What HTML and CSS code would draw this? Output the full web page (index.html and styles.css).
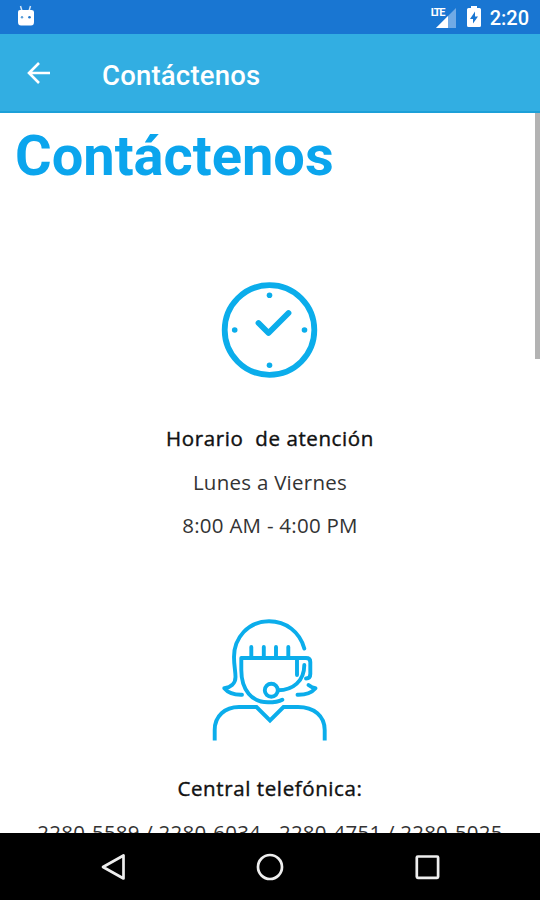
FILE: index.html
```html
<!DOCTYPE html>
<html lang="es">
<head>
  <meta charset="UTF-8">
  <meta name="viewport" content="width=device-width, initial-scale=1.0">
  <title>Contáctenos</title>
  <link rel="stylesheet" href="styles.css">
</head>
<body>
  <div class="estado">
    <svg class="android" width="18" height="22" viewBox="0 0 18 22">
      <path d="M3.500 1L5 6M13.500 1L12 6" stroke="#d5e8fa" stroke-width="1.500"/>
      <path d="M1 7Q1 5 3 5H14.500Q17 5 17 7V17Q17 20.500 14 20.500H4Q1 20.500 1 17Z" fill="#fff"/>
      <circle cx="5" cy="12.300" r="1.200" fill="#5d9fd8"/>
      <circle cx="12.500" cy="12.300" r="1.300" fill="#2378cc"/>
    </svg>
    <div class="indicadores">
      <div class="senal">
        <svg width="20" height="20" viewBox="0 0 20 20">
          <path d="M0 20L20 0V20Z" fill="#71aae5"/>
          <path d="M0 20L12 8V20Z" fill="#fff"/>
        </svg>
        <span class="lte">LTE</span>
      </div>
      <svg class="bateria" width="14" height="22" viewBox="0 0 14 22">
        <path d="M4 0H10V2H12.500Q14 2 14 3.500V19.500Q14 21 12.500 21H1.500Q0 21 0 19.500V3.500Q0 2 1.500 2H4Z" fill="#fff"/>
        <path d="M8 5.500L3 13H6V17.500L11 10.500H8Z" fill="#1976d2"/>
      </svg>
      <span class="hora">2:20</span>
    </div>
  </div>

  <header>
    <svg class="volver" width="24" height="24" viewBox="0 0 24 24">
      <path d="M12 2L2 12L12 22M2 12H23" fill="none" stroke="#fff" stroke-width="2.600"/>
    </svg>
    <span class="titulo">Contáctenos</span>
  </header>

  <main class="contenido">
    <h1>Contáctenos</h1>

    <section class="bloque horario">
      <svg width="120" height="120" viewBox="0 0 120 120">
        <g fill="none" stroke="#0badeb" stroke-width="5.800" stroke-linecap="round" stroke-linejoin="round">
          <circle cx="59.500" cy="60" r="44.800"/>
          <path d="M48.500 53L58.500 63L78.500 43"/>
        </g>
        <g fill="#0badeb">
          <circle cx="59.500" cy="25.200" r="2.800"/>
          <circle cx="59.500" cy="95.200" r="2.800"/>
          <circle cx="24.700" cy="60" r="2.800"/>
          <circle cx="94.500" cy="60" r="2.800"/>
        </g>
      </svg>
      <p class="negrita horas-titulo">Horario&nbsp; de atención</p>
      <p class="dias">Lunes a Viernes</p>
      <p class="horas">8:00 AM - 4:00 PM</p>
    </section>

    <section class="bloque central">
      <svg width="140" height="140" viewBox="0 0 140 140">
        <g fill="none" stroke="#0badeb" stroke-width="3.900" stroke-linecap="round" stroke-linejoin="round">
          <path d="M104.300 38.500C100 22 86 11.300 69 11.300C48 11.300 34 28 34 47C34 56 35.500 61 35.500 67C35.500 74 30 77.500 24.300 78.300C29 84 35 85 42 84.800"/>
          <path d="M51.300 37V47M63.800 37V47M76 37V47M88.300 37V47"/>
          <path d="M97 65V48H41.300V60C41.300 80 52 92.300 68 92.300C74 92.300 79 91.500 82.300 89.700"/>
          <path d="M97 48H106Q110.300 48 110.300 52V64Q110.300 68.500 106 68.500"/>
          <path d="M104.300 55C104.300 71 93 80.300 78 80.300"/>
          <circle cx="71.300" cy="80.300" r="6.500"/>
          <path d="M108.500 75C111 77 113 78 115.500 78.300C111 83.500 105 85 97.500 84.800"/>
        </g>
        <path d="M14.700 130.500V120C14.700 106 25 97 39 97H56.500L70 110.500L83.500 97H98C114 97 124.700 106 124.700 120V130.500" fill="none" stroke="#0badeb" stroke-width="3.900"/>
      </svg>
      <p class="negrita central-titulo">Central telefónica:</p>
      <p class="telefonos">2280-5589 / 2280-6034 - 2280-4751 / 2280-5025</p>
    </section>

    <div class="barra"></div>
  </main>

  <footer>
    <svg width="26" height="28" viewBox="0 0 26 28">
      <path d="M23.500 2.500V25.500L3 14Z" fill="none" stroke="#eee" stroke-width="2.700" stroke-linejoin="round"/>
    </svg>
    <svg width="28" height="28" viewBox="0 0 28 28">
      <circle cx="14" cy="14" r="12" fill="none" stroke="#eee" stroke-width="2.700"/>
    </svg>
    <svg width="26" height="28" viewBox="0 0 26 28">
      <rect x="2.800" y="3.500" width="21.300" height="21.300" rx="1" fill="none" stroke="#eee" stroke-width="2.700"/>
    </svg>
  </footer>
</body>
</html>
```
FILE: styles.css
```css
body {
  display: flex;
  flex-direction: column;
  height: 900px;
  margin: 0;
  overflow: hidden;
  font-family: 'Open Sans', sans-serif;
  background-color: #fff;
}

svg {
  display: block;
  flex: none;
}

.estado {
  display: flex;
  justify-content: space-between;
  flex: none;
  height: 34px;
  padding: 0 11px 0 17px;
  box-sizing: border-box;
  background-color: #1976d2;
  color: #fff;
  font-family: Roboto, sans-serif;
}

.android {
  margin-top: 5px;
}

.indicadores {
  display: flex;
}

.senal {
  position: relative;
  margin: 8px 11px 0 0;
}

.lte {
  position: absolute;
  left: -5px;
  top: -1px;
  font-size: 11px;
  line-height: 11px;
  font-weight: bold;
  letter-spacing: -1.500px;
}

.bateria {
  margin: 6px 9px 0 0;
}

.hora {
  font-size: 20px;
  line-height: 37px;
  font-weight: 500;
}

header {
  display: flex;
  align-items: center;
  flex: none;
  height: 79px;
  padding: 0 27px;
  box-sizing: border-box;
  background-color: #32aee2;
  border-bottom: 2px solid #1ca0d8;
}

.titulo {
  margin: 5px 0 0 51px;
  color: #fff;
  font-family: Roboto, sans-serif;
  font-size: 27.500px;
  font-weight: 500;
  letter-spacing: 0.200px;
}

.contenido {
  position: relative;
  flex: none;
  height: 720px;
  overflow: hidden;
}

h1 {
  margin: 10px 0 0 15px;
  color: #0ba5ed;
  font-family: Roboto, sans-serif;
  font-size: 56px;
  line-height: 66px;
  font-weight: bold;
}

.bloque {
  display: flex;
  flex-direction: column;
  align-items: center;
}

.horario {
  padding-top: 81px;
}

.central {
  padding-top: 62px;
}

p {
  margin: 0;
  color: #333;
  font-size: 20.500px;
  line-height: 43.700px;
  letter-spacing: 0.260px;
  white-space: nowrap;
}

.negrita {
  color: #111;
  letter-spacing: 0.600px;
  -webkit-text-stroke: 0.400px #111;
}

.telefonos {
  line-height: 42.500px;
  letter-spacing: 0.230px;
}

.horas-titulo {
  margin-top: 27px;
}

.central-titulo {
  margin-top: 17px;
}

.barra {
  position: absolute;
  top: 0;
  right: 0;
  width: 5px;
  height: 246px;
  background-color: #b3b3b3;
}

footer {
  display: flex;
  align-items: center;
  justify-content: space-between;
  flex: none;
  height: 67px;
  padding: 0 100px;
  box-sizing: border-box;
  background-color: #000;
}
```
